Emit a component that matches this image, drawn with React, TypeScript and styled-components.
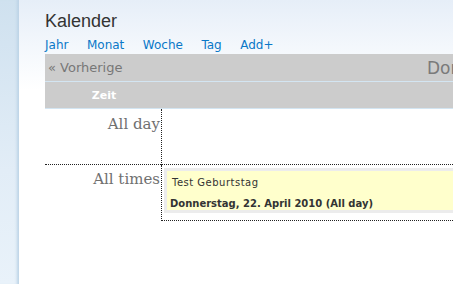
import React from 'react';
import styled, { createGlobalStyle } from 'styled-components';

const GlobalStyle = createGlobalStyle`
  html, body {
    margin: 0;
    padding: 0;
    background: #fff;
  }
`;

const Page = styled.div`
  display: flex;
  width: 453px;
  height: 284px;
  overflow: hidden;
  font-family: 'DejaVu Sans', Verdana, sans-serif;
`;

const SideStrip = styled.div`
  flex: 0 0 19px;
  background: linear-gradient(to bottom, #cfe1ef 0%, #e2edf7 60%, #e9f2fa 100%);
  box-shadow: inset -4px 0 3px -2px #bcd3e6;
`;

const Main = styled.div`
  flex: 1;
  min-width: 0;
  overflow: hidden;
  padding: 11px 0 0 26px;
  background: linear-gradient(to bottom, #e6eef8 0px, #f3f7fc 45px, #ffffff 90px);
`;

const Title = styled.h1`
  margin: 0;
  font-family: 'Liberation Sans', Arial, sans-serif;
  font-size: 18px;
  line-height: 20px;
  font-weight: normal;
  color: #333;
`;

const Nav = styled.nav`
  display: flex;
  gap: 18.5px;
  margin-top: 7px;
  font-size: 12px;
  line-height: 14px;
`;

const NavLink = styled.a`
  color: #0a78c8;
  text-decoration: none;
`;

const Calendar = styled.div`
  width: 700px;
  margin-top: 2px;
`;

const NavBar = styled.div`
  display: grid;
  grid-template-columns: 382px 1fr;
  align-items: center;
  height: 27px;
  background: #cccccc;
  border-bottom: 1px solid #d3e5f2;
  color: #777;
`;

const PrevLink = styled.span`
  padding-left: 3px;
  font-size: 13px;
`;

const DayTitle = styled.span`
  font-size: 17px;
  color: #7a7a7a;
  white-space: nowrap;
`;

const HeadRow = styled.div`
  display: grid;
  grid-template-columns: 116px 1fr;
  height: 26px;
  background: #cccccc;
  border-bottom: 1px solid #d3e5f2;
`;

const HeadCell = styled.div`
  display: flex;
  align-items: center;
  justify-content: center;
  padding-left: 2px;
  font-size: 11px;
  font-weight: bold;
  color: #fff;
`;

const Row = styled.div`
  display: grid;
  grid-template-columns: 116px 1fr;
`;

const TimeCell = styled.div<{ $divided?: boolean }>`
  height: 56px;
  text-align: right;
  padding-right: 1px;
  font-family: 'DejaVu Serif', 'Liberation Serif', serif;
  font-size: 15px;
  line-height: 18px;
  color: #707070;
  box-sizing: border-box;
  padding-top: ${({ $divided }) => ($divided ? '6px' : '5px')};
  border-bottom: ${({ $divided }) => ($divided ? '1px dotted #222' : 'none')};
`;

const SlotCell = styled.div`
  height: 56px;
  box-sizing: border-box;
  border-left: 1px dotted #222;
  border-bottom: 1px dotted #222;
  padding: 3px 0 0 2px;
`;

const EventBox = styled.div`
  height: 45px;
  box-sizing: border-box;
  border: 3px solid #ececec;
  border-right: none;
  background: #ffffcc;
  padding: 5px 0 0 3px;
  color: #333;
`;

const EventTitle = styled.div`
  font-size: 10px;
  letter-spacing: 0.5px;
  line-height: 13px;
  padding-left: 2px;
`;

const EventDate = styled.div`
  margin-top: 8px;
  font-size: 10px;
  font-weight: bold;
  line-height: 13px;
`;

export default function App() {
  const links = ['Jahr', 'Monat', 'Woche', 'Tag', 'Add+'];
  return (
    <>
      <GlobalStyle />
      <Page>
        <SideStrip />
        <Main>
          <Title>Kalender</Title>
          <Nav>
            {links.map((l) => (
              <NavLink key={l} href="#">
                {l}
              </NavLink>
            ))}
          </Nav>
          <Calendar>
            <NavBar>
              <PrevLink>« Vorherige</PrevLink>
              <DayTitle>Donnerstag, 22. April 2010</DayTitle>
            </NavBar>
            <HeadRow>
              <HeadCell>Zeit</HeadCell>
              <HeadCell />
            </HeadRow>
            <Row>
              <TimeCell $divided>All day</TimeCell>
              <SlotCell />
            </Row>
            <Row>
              <TimeCell>All times</TimeCell>
              <SlotCell>
                <EventBox>
                  <EventTitle>Test Geburtstag</EventTitle>
                  <EventDate>Donnerstag, 22. April 2010 (All day)</EventDate>
                </EventBox>
              </SlotCell>
            </Row>
          </Calendar>
        </Main>
      </Page>
    </>
  );
}
